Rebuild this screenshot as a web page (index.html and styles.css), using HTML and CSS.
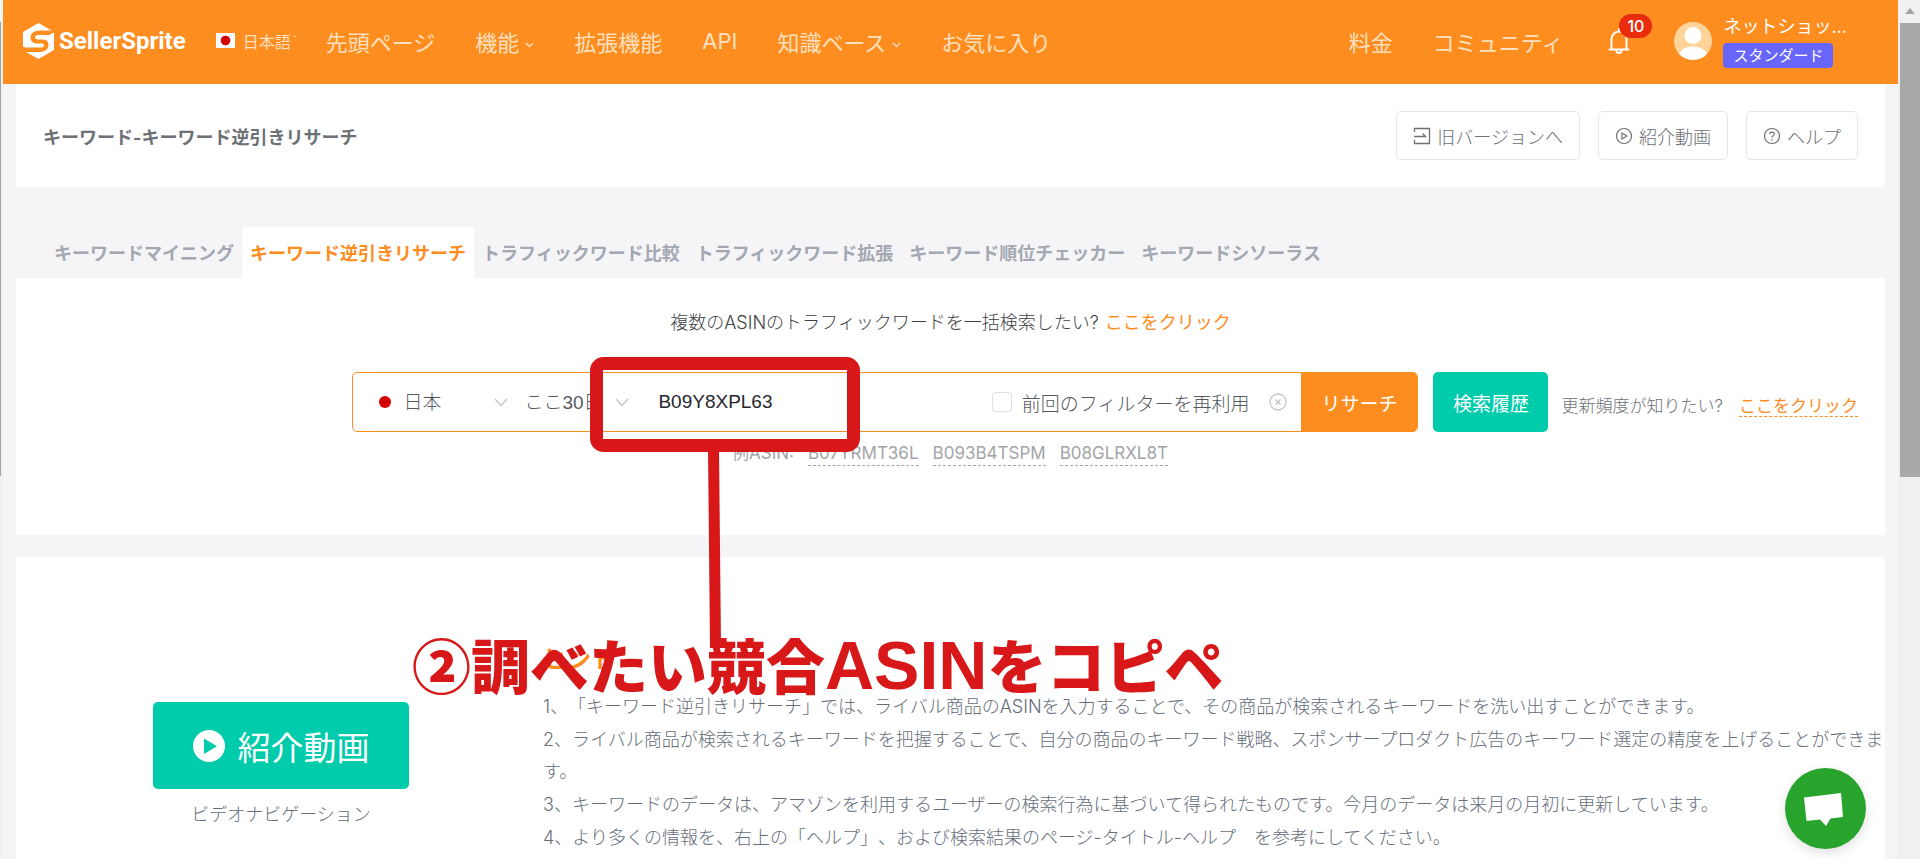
FILE: index.html
```html
<!DOCTYPE html>
<html lang="ja">
<head>
<meta charset="utf-8">
<title>キーワード逆引きリサーチ - SellerSprite</title>
<link rel="stylesheet" href="styles.css">
</head>
<body>
<div class="window">
  <div class="edge"></div>
  <div class="app">
    <header class="topbar">
      <a class="logo" href="#">
        <svg class="logo-mark" viewBox="0 0 31 36" aria-hidden="true">
          <path fill="#fff" d="M15.500 0 28.500 7.500H16.500C11 7.500 7.500 10.500 7.500 14.500S10.500 20.500 14.500 20.500H18.500C20.500 20.500 21 21.200 21 22.300S20 24.500 18.500 24.500H2L0 23.500V9Z"/>
          <path fill="#fff" d="M31 9.500V27L15.500 36 3 29H17.500C22 29 25.500 26 25.500 22S23 16.500 19.500 16.500H15C13 16.500 12.200 15.600 12.200 14.300S13.200 12 15 12H26Z"/>
        </svg>
        <span>SellerSprite</span>
      </a>
      <button class="lang" type="button">
        <svg class="flag" viewBox="0 0 19 15" aria-hidden="true"><rect width="19" height="15" fill="#fff"/><circle cx="9.500" cy="7.500" r="4.800" fill="#d30000"/></svg>
        日本語
        <svg class="caret-tiny" viewBox="0 0 4 3" aria-hidden="true"><path d="M.5.5 2 2 3.500.5" fill="none" stroke="currentColor"/></svg>
      </button>
      <nav class="nav">
        <a href="#">先頭ページ</a>
        <a href="#">機能<svg class="caret" viewBox="0 0 9 6" aria-hidden="true"><path d="M1 1l3.500 3.500L8 1" fill="none" stroke="currentColor" stroke-width="1.500"/></svg></a>
        <a href="#">拡張機能</a>
        <a href="#">API</a>
        <a href="#">知識ベース<svg class="caret" viewBox="0 0 9 6" aria-hidden="true"><path d="M1 1l3.500 3.500L8 1" fill="none" stroke="currentColor" stroke-width="1.500"/></svg></a>
        <a href="#">お気に入り</a>
      </nav>
      <nav class="nav nav-right">
        <a href="#">料金</a>
        <a href="#">コミュニティ</a>
      </nav>
      <button class="bell" type="button" aria-label="通知">
        <svg viewBox="0 0 22 26" aria-hidden="true"><path d="M1.500 21.500h19M3.500 21.500V11.500C3.500 7 6.500 3.500 11 3.500s7.500 3.500 7.500 8v10M11 3.500V1M8.500 22.500a2.500 2.500 0 0 0 5 0" fill="none" stroke="#fff" stroke-width="2" stroke-linecap="round"/></svg>
        <span class="count">10</span>
      </button>
      <a class="user" href="#">
        <svg class="avatar" viewBox="0 0 38 38" aria-hidden="true">
          <clipPath id="face"><circle cx="19" cy="19" r="19"/></clipPath>
          <circle cx="19" cy="19" r="19" fill="#ffd49b"/>
          <g clip-path="url(#face)" fill="#fff"><circle cx="19" cy="13.500" r="8.500"/><ellipse cx="19" cy="35.500" rx="15" ry="11"/></g>
        </svg>
        <span class="user-text"><span class="user-name">ネットショッ...</span><span class="plan">スタンダード</span></span>
      </a>
    </header>

    <main class="content">
      <section class="card page-head">
        <h1>キーワード-キーワード逆引きリサーチ</h1>
        <div class="actions">
          <button type="button"><svg viewBox="0 0 18 18" aria-hidden="true"><path d="M1.500 5V1.500h15v15h-15V13M1 9.500h11.500L9.500 6.500" fill="none" stroke="currentColor" stroke-width="1.300"/></svg>旧バージョンへ</button>
          <button type="button"><svg viewBox="0 0 18 18" aria-hidden="true"><circle cx="9" cy="9" r="7.500" fill="none" stroke="currentColor" stroke-width="1.200"/><path d="M7 6l5 3-5 3z" fill="none" stroke="currentColor" stroke-width="1.200"/></svg>紹介動画</button>
          <button type="button"><svg viewBox="0 0 18 18" aria-hidden="true"><circle cx="9" cy="9" r="7.500" fill="none" stroke="currentColor" stroke-width="1.200"/><path d="M6.800 7.200C6.800 4.400 11.300 4.400 11.300 7.100 11.300 8.800 9 8.800 9 10.500M9 12v1.500" fill="none" stroke="currentColor" stroke-width="1.200"/></svg>ヘルプ</button>
        </div>
      </section>

      <nav class="tabs">
        <a href="#">キーワードマイニング</a>
        <a href="#" class="active" aria-current="page">キーワード逆引きリサーチ</a>
        <a href="#">トラフィックワード比較</a>
        <a href="#">トラフィックワード拡張</a>
        <a href="#">キーワード順位チェッカー</a>
        <a href="#">キーワードシソーラス</a>
      </nav>

      <section class="card search-card">
        <p class="bulk">複数のASINのトラフィックワードを一括検索したい?<a href="#">ここをクリック</a></p>
        <form class="search-row">
          <div class="search-box">
            <span class="dot"></span>
            <select class="country" aria-label="国"><option>日本</option></select>
            <svg class="chevron" viewBox="0 0 14 9" aria-hidden="true"><path d="M1 1l6 6.500L13 1" fill="none" stroke="currentColor" stroke-width="1.300"/></svg>
            <select class="period" aria-label="期間"><option>ここ30日</option></select>
            <svg class="chevron" viewBox="0 0 14 9" aria-hidden="true"><path d="M1 1l6 6.500L13 1" fill="none" stroke="currentColor" stroke-width="1.300"/></svg>
            <input class="asin" type="text" value="B09Y8XPL63" aria-label="ASIN">
            <label class="reuse"><input type="checkbox">前回のフィルターを再利用</label>
            <button class="clear" type="button" aria-label="クリア"><svg viewBox="0 0 18 18" aria-hidden="true"><circle cx="9" cy="9" r="8" fill="none" stroke="currentColor" stroke-width="1.300"/><path d="M6.500 6.500l5 5M11.500 6.500l-5 5" stroke="currentColor" stroke-width="1.500"/></svg></button>
            <button class="submit" type="button">リサーチ</button>
          </div>
          <button class="history" type="button">検索履歴</button>
          <p class="frequency">更新頻度が知りたい?<a href="#">ここをクリック</a></p>
        </form>
        <p class="examples"><span>例ASIN:</span><a href="#">B07YRMT36L</a><a href="#">B093B4TSPM</a><a href="#">B08GLRXL8T</a></p>
      </section>

      <section class="card guide">
        <div class="video">
          <button type="button"><svg viewBox="0 0 32 32" aria-hidden="true"><circle cx="16" cy="16" r="16" fill="#fff"/><path d="M11 8.500v15.500l13-7.700z" fill="#00cbab"/></svg>紹介動画</button>
          <span>ビデオナビゲーション</span>
        </div>
        <div class="tips">
          <h2>ヒント</h2>
          <p>1、「キーワード逆引きリサーチ」では、ライバル商品のASINを入力することで、その商品が検索されるキーワードを洗い出すことができます。</p>
          <p>2、ライバル商品が検索されるキーワードを把握することで、自分の商品のキーワード戦略、スポンサープロダクト広告のキーワード選定の精度を上げることができます。</p>
          <p>3、キーワードのデータは、アマゾンを利用するユーザーの検索行為に基づいて得られたものです。今月のデータは来月の月初に更新しています。</p>
          <p>4、より多くの情報を、右上の「ヘルプ」、および検索結果のページ-タイトル-ヘルプ　を参考にしてください。</p>
        </div>
      </section>
    </main>
  </div>
  <div class="scrollbar">
    <svg viewBox="0 0 20 23" aria-hidden="true"><path d="M5 14l5-6 5 6z" fill="#a3a3a3"/></svg>
    <div class="thumb"></div>
  </div>

  <svg class="callout-lines" viewBox="0 0 270 290" aria-hidden="true">
    <rect x="6.500" y="6.500" width="257" height="82" rx="7" fill="none" stroke="#d71718" stroke-width="13"/>
    <path d="M118 90h11l2 200h-11z" fill="#d71718"/>
  </svg>
  <div class="callout-text">②調べたい競合<span>ASIN</span>をコピペ</div>
  <button class="chat" type="button" aria-label="チャット">
    <svg viewBox="0 0 81 81" aria-hidden="true"><path d="M19 29.500 56 25l2 24-12.500 1.500L41 58l-6-6.500L21.500 53z" fill="#fff"/></svg>
  </button>
</div>
</body>
</html>
```
FILE: styles.css
```css
* { box-sizing: border-box; }
body {
  margin: 0;
  height: 100vh;
  overflow: hidden;
  background: #f5f5f7;
  font-family: Inter, "Noto Sans CJK JP", sans-serif;
  font-size: 18px;
  font-weight: 300;
  color: #666e7a;
}
h1, h2, p { margin: 0; }
a { color: inherit; text-decoration: none; }
button {
  font: inherit;
  color: inherit;
  background: none;
  border: 0;
  padding: 0;
  white-space: nowrap;
  cursor: pointer;
}
svg { display: block; flex: none; }

.window { position: relative; display: flex; height: 100vh; overflow: hidden; }
.edge {
  flex: none;
  width: 3px;
  background: linear-gradient(#a3a3a3, #a3a3a3) 0 22px / 1px 454px no-repeat #f1f1f2;
}
.app { flex: 1; min-width: 0; }
.scrollbar { flex: none; width: 22px; padding-left: 2px; background: #f0f0f0; }
.scrollbar svg { width: 20px; height: 23px; }
.thumb { height: 454px; background: #a8a8a8; }

/* Header */
.topbar {
  display: flex;
  align-items: center;
  height: 84px;
  padding: 0 51px 3px 20px;
  background: #fd8d1f;
  color: #ffe0bf;
}
.logo {
  display: flex;
  align-items: center;
  gap: 5px;
  color: #fff;
  font: 700 24px Roboto, sans-serif;
}
.logo-mark { width: 31px; height: 36px; }
.lang { display: flex; align-items: center; gap: 8px; margin-left: 30px; font-size: 16px; font-weight: 400; }
.flag { width: 19px; height: 15px; }
.caret-tiny { width: 4px; height: 3px; margin: -8px 0 0 -6px; }
.nav { display: flex; align-items: center; gap: 40px; margin-left: 29px; font-size: 22px; font-weight: 400; white-space: nowrap; }
.nav a { display: flex; align-items: center; }
.caret { width: 9px; height: 6px; margin: 8px 0 0 6px; }
.nav-right { margin-left: auto; }
.bell { position: relative; width: 22px; height: 26px; margin: 0 44px 0 45px; }
.bell svg { width: 22px; height: 26px; }
.count {
  position: absolute;
  left: 11px;
  top: -14px;
  width: 33px;
  border-radius: 12px;
  background: #e82c0c;
  color: #fff;
  font-size: 16px;
  font-weight: 500;
  line-height: 24px;
  text-align: center;
}
.user { display: flex; align-items: center; gap: 11px; color: #fff; font-weight: 400; }
.avatar { width: 38px; height: 38px; }
.user-text { display: flex; flex-direction: column; align-items: flex-start; gap: 4px; }
.user-name { line-height: 25px; white-space: nowrap; }
.plan { padding: 0 10px; border-radius: 4px; background: #6865fa; font-size: 15px; line-height: 25px; }

/* Cards */
.content { padding: 0 13px; }
.card { background: #fff; }
.page-head {
  display: flex;
  align-items: center;
  justify-content: space-between;
  height: 103px;
  padding: 0 27px;
}
h1 { font-size: 18px; font-weight: 700; color: #6d7075; }
.actions { display: flex; gap: 18px; }
.actions button {
  display: flex;
  align-items: center;
  gap: 6px;
  height: 49px;
  padding: 0 16px;
  border: 1px solid #e6e6ea;
  border-radius: 5px;
  color: #6c6f74;
}
.actions svg { width: 18px; height: 18px; }

.tabs { display: flex; padding: 40px 30px 0; font-weight: 700; color: #a3a8b2; }
.tabs a { height: 51px; padding: 0 8px; border-radius: 4px 4px 0 0; line-height: 53px; white-space: nowrap; }
.tabs .active { background: #fff; color: #fd8d1f; }

.search-card { height: 257px; margin-bottom: 22px; padding-top: 30px; }
.bulk { line-height: 30px; text-align: center; color: #3c3f44; }
.bulk a { margin-left: 6px; color: #fd8d1f; font-weight: 400; }
.search-row { display: flex; align-items: center; margin: 34px 27px 0 18%; }
.search-box {
  display: flex;
  align-items: center;
  flex: 1;
  min-width: 0;
  height: 60px;
  padding-left: 26px;
  border: 1px solid #fd8d1f;
  border-radius: 5px;
  font-size: 19px;
  color: #55585e;
}
.dot { flex: none; width: 12px; height: 12px; margin-right: 12px; border-radius: 50%; background: #d30000; }
select, .asin {
  appearance: none;
  border: 0;
  padding: 0;
  background: none;
  font: inherit;
  font-family: "Liberation Sans", "Noto Sans CJK JP", sans-serif;
  color: inherit;
  outline: 0;
}
.country { width: 91px; }
.period { width: 91px; margin-left: 16px; }
.chevron { width: 14px; height: 9px; color: #c0c4cc; }
.asin { flex: 1; min-width: 0; margin-left: 29px; font-weight: 400; color: #26262e; }
.reuse { display: flex; align-items: center; gap: 10px; white-space: nowrap; }
.reuse input {
  appearance: none;
  width: 20px;
  height: 20px;
  margin: 0;
  border: 1px solid #dcdfe6;
  border-radius: 3px;
}
.clear { margin: 0 14px 0 20px; color: #c0c4cc; }
.clear svg { width: 18px; height: 18px; }
.submit { width: 116px; height: 60px; border-radius: 0 5px 5px 0; background: #fd8d1f; color: #fff; font-weight: 400; }
.history { width: 115px; height: 60px; margin: 0 13px 0 15px; border-radius: 5px; background: #00cbab; color: #fff; font-size: 19px; font-weight: 400; }
.frequency { margin-top: 4px; font-size: 17px; white-space: nowrap; color: #6c6f74; }
.frequency a { margin-left: 16px; border-bottom: 1px dashed; color: #fd8d1f; font-weight: 400; }
.examples { display: flex; gap: 14px; margin: 9px 0 0 716px; font-size: 17px; line-height: 24px; font-weight: 400; color: #a2a4a8; }
.examples a { border-bottom: 1px dashed; }

/* Guide */
.guide { display: flex; min-height: 400px; padding-left: 137px; }
.video { display: flex; flex-direction: column; align-items: center; flex: none; gap: 11px; width: 256px; padding-top: 145px; }
.video button {
  display: flex;
  align-items: center;
  justify-content: center;
  gap: 13px;
  width: 100%;
  height: 87px;
  border-radius: 5px;
  background: #00cbab;
  color: #fff;
  font-size: 33px;
  font-weight: 400;
}
.video svg { width: 32px; height: 32px; }
.tips {
  flex: 1;
  min-width: 0;
  display: flex;
  flex-direction: column;
  gap: 1px;
  margin-left: 134px;
  padding-top: 87px;
  line-height: 32px;
  text-spacing-trim: space-all;
}
h2 { margin-bottom: 14px; font-size: 24px; font-weight: 700; line-height: 32px; color: #fd8d1f; }

/* Annotation and chat, drawn over the page */
.callout-lines { position: absolute; left: 590px; top: 357px; width: 270px; height: 290px; }
.callout-text {
  position: absolute;
  left: 412px;
  top: 624px;
  font-size: 59px;
  font-weight: 900;
  line-height: 80px;
  white-space: nowrap;
  color: #d71718;
  font-family: "Noto Sans CJK JP", sans-serif;
}
.callout-text span { font: 700 68px "Liberation Sans", sans-serif; }
.chat {
  position: absolute;
  right: 54px;
  bottom: 10px;
  width: 81px;
  height: 81px;
  border-radius: 50%;
  background: #28a42d;
  box-shadow: 0 4px 12px rgba(0, 0, 0, .12);
}
```
